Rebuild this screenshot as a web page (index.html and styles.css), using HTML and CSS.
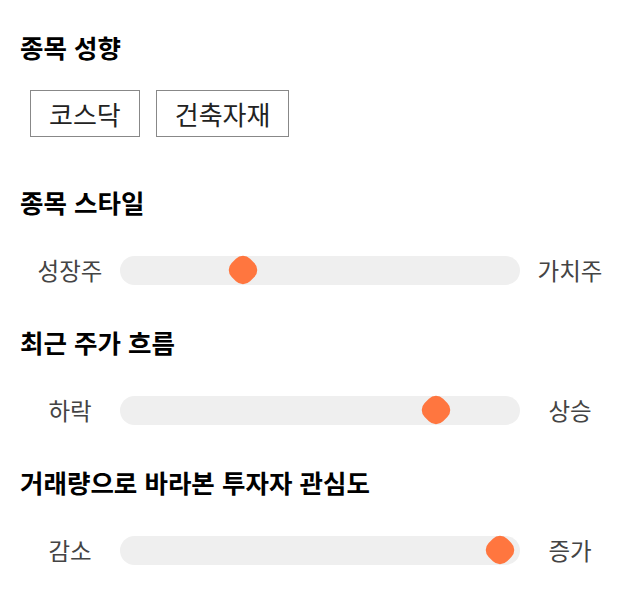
FILE: index.html
```html
<!DOCTYPE html>
<html lang="ko">
<head>
<meta charset="utf-8">
<link rel="stylesheet" href="styles.css">
</head>
<body>
<section class="section section-chips">
  <h2 class="title">종목 성향</h2>
  <div class="chips">
    <span class="chip">코스닥</span>
    <span class="chip">건축자재</span>
  </div>
</section>
<section class="section">
  <h2 class="title">종목 스타일</h2>
  <div class="slider-row">
    <span class="label">성장주</span>
    <div class="track"><span class="thumb" style="left: 30.75%"></span></div>
    <span class="label">가치주</span>
  </div>
</section>
<section class="section">
  <h2 class="title">최근 주가 흐름</h2>
  <div class="slider-row">
    <span class="label">하락</span>
    <div class="track"><span class="thumb" style="left: 79%"></span></div>
    <span class="label">상승</span>
  </div>
</section>
<section class="section">
  <h2 class="title">거래량으로 바라본 투자자 관심도</h2>
  <div class="slider-row">
    <span class="label">감소</span>
    <div class="track"><span class="thumb" style="left: 95%"></span></div>
    <span class="label">증가</span>
  </div>
</section>
</body>
</html>
```
FILE: styles.css
```css
html, body {
  margin: 0;
  background: #ffffff;
}
body {
  padding: 30px 20px 0;
  font-family: "Noto Sans CJK KR", "Noto Sans", sans-serif;
  color: #111;
}
.section {
  margin-bottom: 40px;
}
.section-chips {
  margin-bottom: 48px;
}
.title {
  margin: 0 0 36px;
  font-size: 25.5px;
  line-height: 34px;
  font-weight: 700;
  color: #000;
}
.section-chips .title {
  margin-bottom: 26px;
}
.chips {
  display: flex;
  gap: 16px;
  padding-left: 10px;
}
.chip {
  display: block;
  height: 45px;
  line-height: 45px;
  padding: 0 18px;
  border: 1px solid #888;
  font-size: 26px;
  color: #222;
}
.slider-row {
  display: flex;
  align-items: center;
  height: 30px;
}
.label {
  width: 100px;
  flex: none;
  text-align: center;
  font-size: 23.5px;
  line-height: 30px;
  color: #444;
}
.track {
  position: relative;
  flex: 1;
  height: 29px;
  border-radius: 15px;
  background: #efefef;
}
.thumb {
  position: absolute;
  top: 50%;
  width: 26px;
  height: 26px;
  border-radius: 10px;
  background: #ff763f;
  transform: translate(-50%, -50%) rotate(45deg);
}
```
